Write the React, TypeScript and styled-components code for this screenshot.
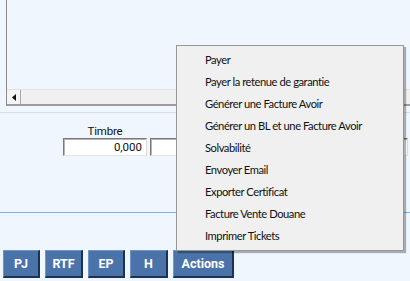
import React from "react";
import styled, {createGlobalStyle} from "styled-components";

const GlobalStyle = createGlobalStyle`
    html, body {
        margin: 0;
        padding: 0;
        background: #eff6fd;
    }
    * {
        box-sizing: border-box;
    }
`;

const Page = styled.div`
    position: relative;
    width: 410px;
    height: 281px;
    overflow: hidden;
    background: #eff6fd;
    font-family: Roboto, "Liberation Sans", sans-serif;
    color: #111;
`;

const Grid = styled.div`
    display: flex;
    flex-direction: column;
    height: 106px;
    margin-left: 6px;
    border-left: 1px solid #8c8c8c;
    border-bottom: 2px solid #9b9b9b;
`;

const GridBody = styled.div`
    flex: 1;
`;

const ScrollBar = styled.div`
    display: flex;
    height: 15px;
    background: #f0f0f0;
    border-top: 1px solid #e2e2e2;
`;

const ArrowButton = styled.div`
    display: flex;
    align-items: center;
    justify-content: center;
    width: 14px;
    border-right: 1px solid #a8a8a8;
    background: #f4f4f4;
`;

const Separator = styled.div`
    margin-top: 6px;
    height: 1px;
    background: #d9dde2;
`;

const FieldsRow = styled.div`
    display: flex;
    gap: 3px;
    margin-top: 11px;
    padding-left: 63px;
`;

const Field = styled.div`
    display: flex;
    flex-direction: column;
    align-items: center;
    width: 84px;
    flex-shrink: 0;
`;

const Label = styled.div`
    height: 14px;
    font-size: 11.5px;
    line-height: 14px;
    letter-spacing: -0.2px;
`;

const Input = styled.div`
    width: 100%;
    height: 18px;
    padding-right: 4px;
    background: #fff;
    border: 1px solid;
    border-color: #7a7a7a #dadada #e6e6e6 #7a7a7a;
    box-shadow: inset 1px 1px 0 #b4b4b4;
    font-size: 11.5px;
    line-height: 16px;
    text-align: right;
`;

const Divider = styled.div`
    margin-top: 56px;
    height: 1px;
    background: #80b3e0;
`;

const ButtonBar = styled.div`
    display: flex;
    gap: 5px;
    margin-top: 37px;
    padding-left: 3px;
`;

const Button = styled.div`
    display: flex;
    align-items: center;
    justify-content: center;
    width: ${({w}: {w: number}) => w}px;
    height: 28px;
    background: #4a73aa;
    border-top: 1px solid #7093c2;
    border-left: 1px solid #7093c2;
    border-right: 2px solid #1d3150;
    border-bottom: 2px solid #1d3150;
    color: #fff;
    font-weight: bold;
    font-size: 12.5px;
`;

const Menu = styled.div`
    position: absolute;
    left: 176px;
    top: 45px;
    width: 228px;
    padding: 3px 0;
    background: #f0f0f0;
    border: 1px solid #979797;
    box-shadow: 2px 2px 1px rgba(0, 0, 0, 0.3);
`;

const MenuItem = styled.div`
    height: 22px;
    padding-left: 28px;
    font-family: Lato, Roboto, sans-serif;
    font-size: 11.2px;
    line-height: 22px;
    letter-spacing: -0.45px;
    color: #111;
    white-space: nowrap;
`;

const fields = [
    {label: "Timbre", value: "0,000"},
    {label: "", value: ""},
    {label: "", value: ""},
    {label: "", value: "0,000"}
];

const buttons = [
    {text: "PJ", w: 37},
    {text: "RTF", w: 38},
    {text: "EP", w: 37},
    {text: "H", w: 38},
    {text: "Actions", w: 61}
];

const actions = [
    "Payer",
    "Payer la retenue de garantie",
    "Générer une Facture Avoir",
    "Générer un BL et une Facture Avoir",
    "Solvabilité",
    "Envoyer Email",
    "Exporter Certificat",
    "Facture Vente Douane",
    "Imprimer Tickets"
];

function App() {
    return <Page>
        <GlobalStyle/>
        <Grid>
            <GridBody/>
            <ScrollBar>
                <ArrowButton>
                    <svg width="4" height="7" viewBox="0 0 4 7">
                        <path d="M4 0 L0 3.5 L4 7 Z" fill="#111"/>
                    </svg>
                </ArrowButton>
            </ScrollBar>
        </Grid>
        <Separator/>
        <FieldsRow>
            {fields.map((f, i) => <Field key={i}>
                <Label>{f.label}</Label>
                <Input>{f.value}</Input>
            </Field>)}
        </FieldsRow>
        <Divider/>
        <ButtonBar>
            {buttons.map(b => <Button key={b.text} w={b.w}>{b.text}</Button>)}
        </ButtonBar>
        <Menu>
            {actions.map(a => <MenuItem key={a}>{a}</MenuItem>)}
        </Menu>
    </Page>
}

export default App;
